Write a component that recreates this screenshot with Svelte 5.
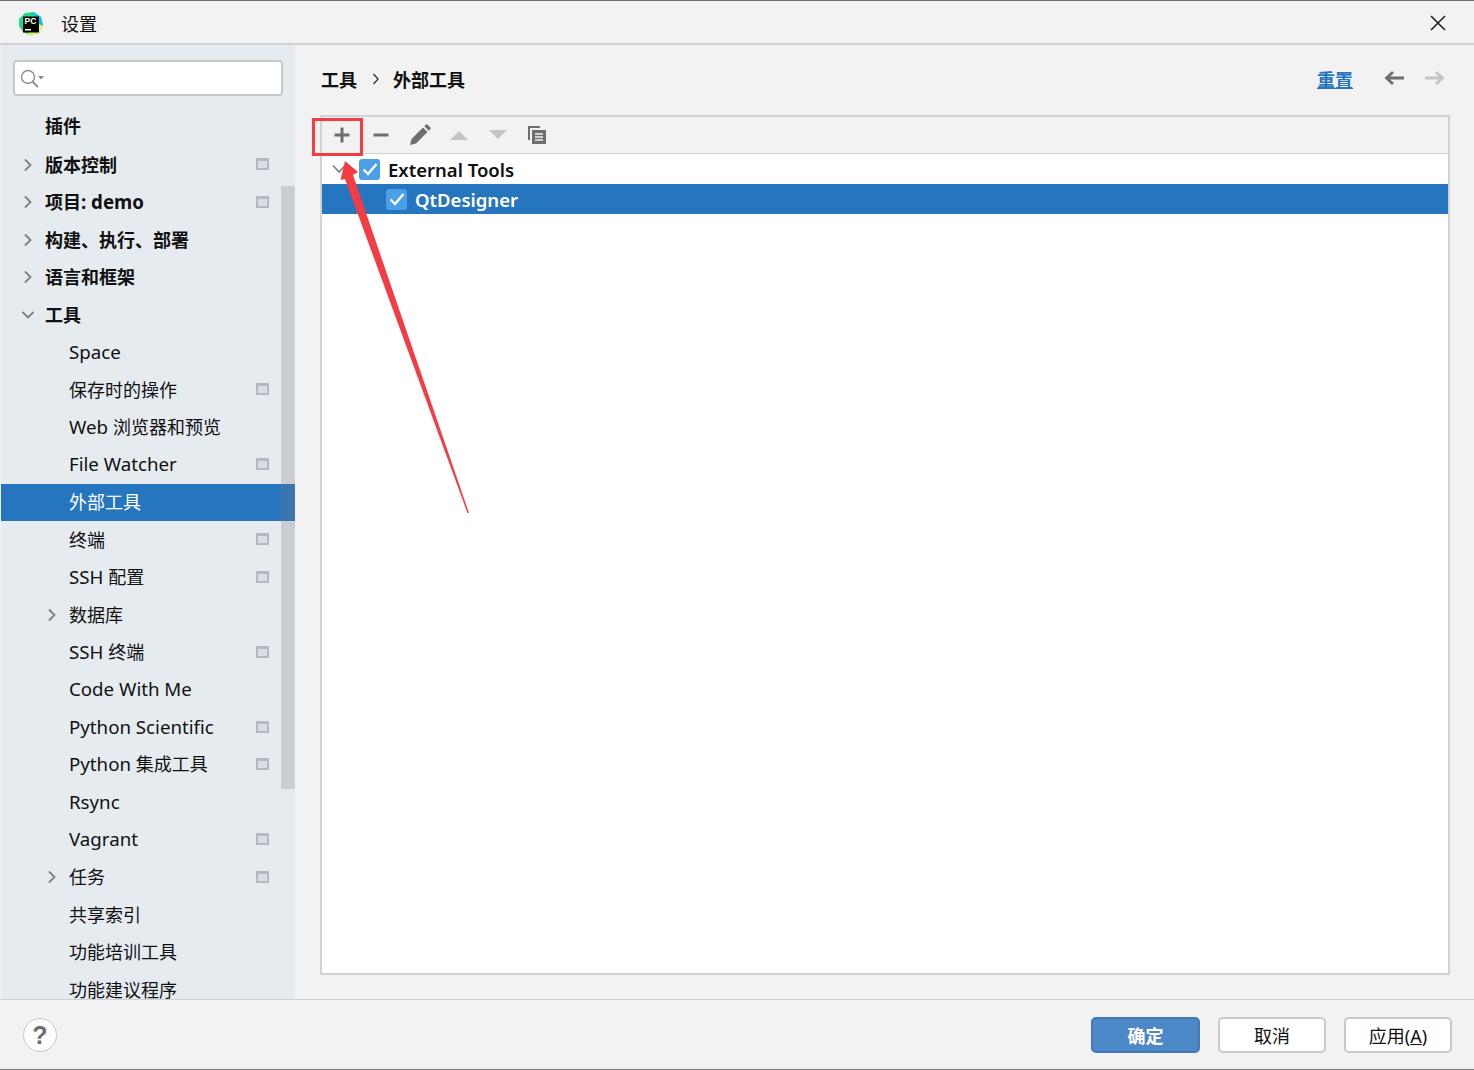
<script lang="ts">
  type NavItem = { label: string; level: 0 | 1; bold?: boolean; arrow?: "right" | "down"; badge?: boolean; selected?: boolean };

  const items: NavItem[] = [
    { label: "插件", level: 0, bold: true },
    { label: "版本控制", level: 0, bold: true, arrow: "right", badge: true },
    { label: "项目: demo", level: 0, bold: true, arrow: "right", badge: true },
    { label: "构建、执行、部署", level: 0, bold: true, arrow: "right" },
    { label: "语言和框架", level: 0, bold: true, arrow: "right" },
    { label: "工具", level: 0, bold: true, arrow: "down" },
    { label: "Space", level: 1 },
    { label: "保存时的操作", level: 1, badge: true },
    { label: "Web 浏览器和预览", level: 1 },
    { label: "File Watcher", level: 1, badge: true },
    { label: "外部工具", level: 1, selected: true },
    { label: "终端", level: 1, badge: true },
    { label: "SSH 配置", level: 1, badge: true },
    { label: "数据库", level: 1, arrow: "right" },
    { label: "SSH 终端", level: 1, badge: true },
    { label: "Code With Me", level: 1 },
    { label: "Python Scientific", level: 1, badge: true },
    { label: "Python 集成工具", level: 1, badge: true },
    { label: "Rsync", level: 1 },
    { label: "Vagrant", level: 1, badge: true },
    { label: "任务", level: 1, arrow: "right", badge: true },
    { label: "共享索引", level: 1 },
    { label: "功能培训工具", level: 1 },
    { label: "功能建议程序", level: 1 }
  ];

  // latin runs are set a touch larger than the CJK ones
  const parts = (label: string) => label.split(/([\x20-\x7e]+)/).filter(Boolean);
  const isLatin = (part: string) => /^[\x20-\x7e]+$/.test(part);
</script>

<div class="dialog">
  <header class="titlebar">
    <svg class="logo" width="26" height="26" viewBox="0 0 26 26">
      <path d="M1 9 7 3l9-1 7 5 2 9-4 7-9 2-7-3-4-6z" fill="#21d789" />
      <path d="M15 2l8 5 2 8-6-1z" fill="#07c3f2" />
      <path d="M9 25l12-2 4-7-7-3z" fill="#fcf84a" />
      <rect x="5" y="6.500" width="16" height="16" fill="#000" />
      <text x="6.500" y="14" class="logo-text">PC</text>
      <rect x="7" y="19" width="6" height="1.500" fill="#fff" />
    </svg>
    <span class="title">设置</span>
    <svg class="close" width="16" height="16" viewBox="0 0 16 16">
      <path d="M1 1l14 14M15 1 1 15" stroke="#1a1a1a" stroke-width="1.500" fill="none" />
    </svg>
  </header>

  <div class="body">
    <aside class="sidebar">
      <div class="search">
        <svg width="28" height="20" viewBox="0 0 28 20">
          <circle cx="9" cy="9" r="6.500" fill="none" stroke="#8c8c8c" stroke-width="1.400" />
          <path d="M13.500 13.500 19 19" stroke="#8c8c8c" stroke-width="1.800" />
          <path d="M19 8h6l-3 3.500z" fill="#8c8c8c" />
        </svg>
      </div>
      <nav class="nav">
        {#each items as item}
          <div class="row" class:selected={item.selected} class:bold={item.bold} class:child={item.level === 1}>
            {#if item.arrow}
              <svg class="arrow" width="12" height="14" viewBox="0 0 12 14">
                {#if item.arrow === "right"}
                  <path d="M3 1.500 8.500 7 3 12.500" fill="none" stroke="#7f7f7f" stroke-width="1.800" />
                {:else}
                  <path d="M0.500 4 6 9.500 11.500 4" fill="none" stroke="#7f7f7f" stroke-width="1.800" />
                {/if}
              </svg>
            {/if}
            <span class="label">{#each parts(item.label) as part}<span class:latin={isLatin(part)}>{part}</span>{/each}</span>
            {#if item.badge}
              <span class="badge"></span>
            {/if}
          </div>
        {/each}
      </nav>
      <div class="scrollbar"></div>
    </aside>

    <main class="content">
      <div class="crumbs">
        <b>工具</b>
        <svg class="sep" width="8" height="12" viewBox="0 0 8 12"><path d="M1.500 1 6 6l-4.500 5" fill="none" stroke="#333" stroke-width="1.300" /></svg>
        <b>外部工具</b>
        <a class="reset" href="#top">重置</a>
        <svg class="nav-arrow" width="20" height="16" viewBox="0 0 20 16"><path d="M20 8H3M9 2 2.500 8 9 14" fill="none" stroke="#6e6e6e" stroke-width="2.800" /></svg>
        <svg class="nav-arrow next" width="20" height="16" viewBox="0 0 20 16"><path d="M0 8h17M11 2l6.500 6L11 14" fill="none" stroke="#c4c4c4" stroke-width="2.800" /></svg>
      </div>

      <section class="panel">
        <div class="toolbar">
          <svg width="18" height="18" viewBox="0 0 18 18"><path d="M9 1.500v15M1.500 9h15" stroke="#6e6e6e" stroke-width="3" /></svg>
          <svg width="18" height="18" viewBox="0 0 18 18"><path d="M1.500 9h15" stroke="#6e6e6e" stroke-width="3" /></svg>
          <svg width="22" height="22" viewBox="0 0 22 22"><path d="M1 21l1.500-6L14 3.500l4.500 4.500L7 19.500zM15.300 2.200l1.400-1.400a1.500 1.500 0 0 1 2 0l2.500 2.500a1.500 1.500 0 0 1 0 2l-1.400 1.400z" fill="#6e6e6e" /></svg>
          <svg width="18" height="18" viewBox="0 0 18 18"><path d="M0 14 9 5l9 9z" fill="#c4c4c4" /></svg>
          <svg width="18" height="18" viewBox="0 0 18 18"><path d="M0 4h18l-9 9z" fill="#c4c4c4" /></svg>
          <svg width="20" height="20" viewBox="0 0 20 20">
            <path d="M1 1h12v2H3v12H1z" fill="#6e6e6e" />
            <path d="M5 5h14v14H5z" fill="#6e6e6e" />
            <path d="M8 9h8M8 12h8M8 15h8" stroke="#f2f2f2" stroke-width="1.300" />
          </svg>
        </div>
        <div class="tree">
          <div class="node">
            <svg class="twist" width="14" height="10" viewBox="0 0 14 10"><path d="M1 1.500 7 8l6-6.500" fill="none" stroke="#7f7f7f" stroke-width="1.600" /></svg>
            <span class="check"><svg width="16" height="16" viewBox="0 0 16 16"><path d="M1.500 8.500 6 13l8.500-10" fill="none" stroke="#fff" stroke-width="2.400" /></svg></span>
            <b>External Tools</b>
          </div>
          <div class="node leaf">
            <span class="check"><svg width="16" height="16" viewBox="0 0 16 16"><path d="M1.500 8.500 6 13l8.500-10" fill="none" stroke="#fff" stroke-width="2.400" /></svg></span>
            <b>QtDesigner</b>
          </div>
        </div>
      </section>
    </main>
  </div>

  <footer class="footer">
    <button class="help" type="button">?</button>
    <div class="actions">
      <button class="btn primary" type="button">确定</button>
      <button class="btn" type="button">取消</button>
      <button class="btn" type="button">应用(<u>A</u>)</button>
    </div>
  </footer>

  <!-- annotation drawn on top of the screenshot -->
  <div class="mark-box"></div>
  <svg class="mark-arrow" width="1474" height="1070" viewBox="0 0 1474 1070">
    <path d="M345 161 358 172 353 175 469 513 467.500 513 345 179 340.500 180z" fill="#f43c44" />
  </svg>
</div>

<style>
  :global(body) {
    margin: 0;
    background: #f2f2f2;
  }
  .dialog {
    position: relative;
    width: 1474px;
    height: 1070px;
    box-sizing: border-box;
    display: flex;
    flex-direction: column;
    overflow: hidden;
    border-top: 1px solid #6d6d6d;
    border-bottom: 1px solid #7a7a7a;
    background: #f2f2f2;
    color: #111;
    font-family: "Noto Sans", "Noto Sans CJK SC", sans-serif;
    font-size: 18px;
  }
  .titlebar {
    flex: none;
    height: 41px;
    display: flex;
    align-items: center;
    padding: 1px 28px 0 18px;
    border-bottom: 2px solid #d2d2d2;
  }
  .logo {
    flex: none;
  }
  .logo-text {
    font-family: "Liberation Sans", sans-serif;
    font-size: 8.500px;
    font-weight: 700;
    fill: #fff;
  }
  .title {
    margin-left: 17px;
    font-size: 18px;
  }
  .close {
    margin-left: auto;
  }
  .body {
    flex: 1;
    min-height: 0;
    display: flex;
  }
  .sidebar {
    position: relative;
    flex: none;
    width: 294px;
    margin-left: 1px;
    background: #e6ebf0;
    overflow: hidden;
  }
  .search {
    box-sizing: border-box;
    display: flex;
    align-items: center;
    width: 270px;
    height: 36px;
    margin: 15px 0 0 12px;
    padding-left: 4px;
    background: #fff;
    border: 2px solid #c8c8c8;
    border-radius: 4px;
  }
  .nav {
    margin-top: 11px;
  }
  .row {
    position: relative;
    box-sizing: border-box;
    height: 37.500px;
    display: flex;
    align-items: center;
    padding-left: 44px;
    white-space: nowrap;
    line-height: 1;
  }
  .row:first-child {
    height: 39px;
    padding-bottom: 1.500px;
  }
  .row.child {
    padding-left: 68px;
  }
  .row.bold {
    font-weight: 700;
  }
  .row.selected {
    background: #2675bf;
    color: #fff;
  }
  .latin {
    font-size: 18.700px;
  }
  .arrow {
    position: absolute;
    left: 21px;
  }
  .row.child .arrow {
    left: 45px;
  }
  .badge {
    position: absolute;
    left: 255px;
    top: 12px;
    box-sizing: border-box;
    width: 13px;
    height: 12px;
    border: 2px solid #b1bac3;
    border-top-width: 3px;
    background: #d8dee4;
  }
  .scrollbar {
    position: absolute;
    left: 280px;
    top: 141px;
    width: 14px;
    height: 603px;
    background: rgb(120 120 120 / 0.25);
  }
  .content {
    flex: 1;
    min-width: 0;
    padding: 0 24px 0 25px;
  }
  .crumbs {
    box-sizing: border-box;
    height: 70px;
    display: flex;
    align-items: center;
    gap: 15px;
    padding: 0 5px 2px 1px;
  }
  .crumbs b {
    font-weight: 700;
  }
  .sep {
    margin-right: -2px;
  }
  .reset {
    margin-left: auto;
    margin-right: 16px;
    color: #2675bf;
    font-weight: 700;
  }
  .nav-arrow {
    margin-bottom: 2px;
  }
  .nav-arrow.next {
    margin-left: 6px;
  }
  .panel {
    height: 860px;
    box-sizing: border-box;
    border: 2px solid #d2d2d2;
    display: flex;
    flex-direction: column;
  }
  .toolbar {
    flex: none;
    height: 37px;
    box-sizing: border-box;
    display: grid;
    grid-template-columns: repeat(6, 39px);
    align-items: center;
    justify-items: center;
    border-bottom: 1px solid #d2d2d2;
  }
  .tree {
    flex: 1;
    background: #fff;
  }
  .node {
    height: 30px;
    display: flex;
    align-items: center;
    padding-left: 37px;
    position: relative;
    gap: 8px;
  }
  .node b {
    font-size: 18.500px;
    font-weight: 600;
  }
  .twist {
    position: absolute;
    left: 10px;
    top: 10px;
  }
  .check {
    width: 21px;
    height: 21px;
    display: flex;
    align-items: center;
    justify-content: center;
    background: #4b9fe8;
    border-radius: 3px;
  }
  .node.leaf {
    padding-left: 64px;
    background: #2675bf;
    color: #fff;
  }
  .footer {
    flex: none;
    height: 70px;
    box-sizing: border-box;
    border-top: 1px solid #cdd1d5;
    display: flex;
    align-items: center;
    justify-content: space-between;
    padding: 1px 22px 0 23px;
  }
  .help {
    width: 34px;
    height: 34px;
    padding: 0;
    border: 1.500px solid #c8c8c8;
    border-radius: 50%;
    background: #fff;
    color: #6e6e6e;
    font: 700 25px "Liberation Sans", sans-serif;
  }
  .actions {
    display: flex;
    gap: 18px;
  }
  .btn {
    width: 108px;
    height: 36px;
    padding: 0;
    box-sizing: border-box;
    border: 2px solid #c8c8c8;
    border-radius: 5px;
    background: #fff;
    color: #111;
    font: inherit;
  }
  .btn.primary {
    width: 109px;
    background: #4c87c8;
    border-color: #4279b8;
    color: #fff;
    font-weight: 700;
  }
  .mark-box {
    position: absolute;
    left: 312px;
    top: 117px;
    width: 51px;
    height: 38px;
    box-sizing: border-box;
    border: 3px solid #f43c44;
  }
  .mark-arrow {
    position: absolute;
    left: 0;
    top: -1px;
    pointer-events: none;
  }
</style>
